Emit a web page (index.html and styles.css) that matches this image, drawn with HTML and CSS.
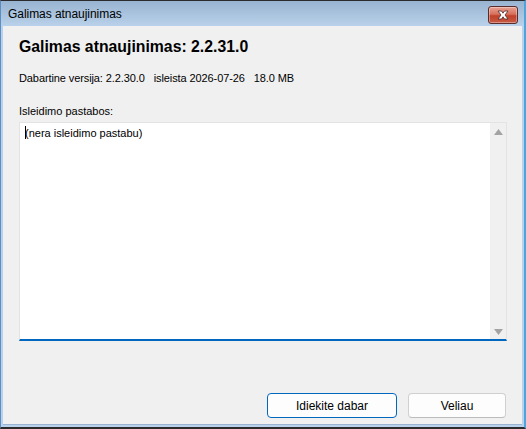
FILE: index.html
```html
<!DOCTYPE html>
<html>
<head>
<meta charset="utf-8">
<link rel="stylesheet" href="styles.css">
</head>
<body>
<div class="window">
  <div class="titlebar">
    <span class="title">Galimas atnaujinimas</span>
    <button class="close" aria-label="Close">
      <svg width="16" height="10" viewBox="0 0 16 10">
        <path d="M3 1 L6.5 1 L8 3.2 L9.5 1 L13 1 L10 5 L13 9 L9.5 9 L8 6.8 L6.5 9 L3 9 L6 5 Z" fill="#ffffff" stroke="#4a2a2a" stroke-width="0.8" stroke-linejoin="round"/>
      </svg>
    </button>
  </div>
  <div class="content">
    <h1 class="heading">Galimas atnaujinimas: 2.2.31.0</h1>
    <p class="meta"><span>Dabartine versija: 2.2.30.0</span><span>isleista 2026-07-26</span><span>18.0 MB</span></p>
    <label class="notes-label">Isleidimo pastabos:</label>
    <div class="notes">
      <div class="notes-text"><span class="caret"></span>(nera isleidimo pastabu)</div>
      <div class="scrollbar">
        <svg class="arrow" width="9" height="6" viewBox="0 0 9 6"><path d="M0 6 L4.5 0 L9 6 Z" fill="#a3a3a3"/></svg>
        <svg class="arrow" width="9" height="6" viewBox="0 0 9 6"><path d="M0 0 L4.5 6 L9 0 Z" fill="#a3a3a3"/></svg>
      </div>
    </div>
    <div class="actions">
      <button class="btn btn-default">Idiekite dabar</button>
      <button class="btn">Veliau</button>
    </div>
  </div>
</div>
</body>
</html>
```
FILE: styles.css
```css
* { box-sizing: border-box; }
html, body { margin: 0; padding: 0; }
body {
  width: 526px;
  height: 429px;
  background: #1e1e1e;
  font-family: "Liberation Sans", Arial, sans-serif;
  font-size: 12px;
  color: #000;
}
.window {
  width: 526px;
  height: 429px;
  display: flex;
  flex-direction: column;
  border-top: 1px solid #2b2b2b;
  border-left: 1px solid #5b8fc4;
  border-right: 2px solid #4aa6dc;
  border-bottom: 2px solid #2b2b2b;
  background: #b9d1ea;
  padding: 0 2px 2px 2px;
}
.titlebar {
  height: 25px;
  flex: none;
  display: flex;
  align-items: center;
  justify-content: space-between;
  background: linear-gradient(#99b4d1, #b9d1ea);
  margin: 0 -2px;
  padding: 0 6px 0 7px;
}
.title {
  font-family: "Liberation Sans", Arial, sans-serif;
  font-size: 12px;
  color: #000;
  padding-top: 1px;
  letter-spacing: -0.05px;
}
.close {
  width: 30px;
  height: 18px;
  margin-top: 2px;
  padding: 0;
  border: 1px solid #5a2c2c;
  border-radius: 3px;
  background: linear-gradient(#e8a294 0%, #d7705e 45%, #c0412a 55%, #c75b45 100%);
  display: flex;
  align-items: center;
  justify-content: center;
  box-shadow: inset 0 0 0 1px rgba(255,255,255,0.35);
}
.content {
  flex: 1;
  background: #f0f0f0;
  border-bottom: 1px solid #99b4d1;
  display: flex;
  flex-direction: column;
  padding: 11px 16px 6px 16px;
}
.heading {
  margin: 0;
  font-size: 15.8px;
  font-weight: bold;
  line-height: 20px;
}
.meta {
  margin: 14px 0 0 0;
  font-size: 11px;
  line-height: 14px;
  display: flex;
  gap: 9px;
  letter-spacing: -0.1px;
}
.notes-label {
  margin-top: 19px;
  font-size: 11px;
  line-height: 14px;
}
.notes {
  margin-top: 4px;
  height: 219px;
  width: 488px;
  display: flex;
  background: #fff;
  border: 1px solid #e3e3e3;
  border-bottom: 2px solid #0067c0;
}
.notes-text {
  flex: 1;
  padding: 3px 5px;
  font-size: 11px;
  line-height: 14px;
}
.caret {
  display: inline-block;
  width: 1px;
  height: 13px;
  background: #000;
  vertical-align: -2px;
  margin-right: -1px;
}
.scrollbar {
  width: 16px;
  background: #f0f0f0;
  display: flex;
  flex-direction: column;
  justify-content: space-between;
  align-items: center;
  padding: 6px 0 4px;
}
.actions {
  margin-top: auto;
  display: flex;
  justify-content: flex-end;
  gap: 11px;
}
.btn {
  height: 25px;
  width: 98px;
  font-family: "Liberation Sans", Arial, sans-serif;
  font-size: 12px;
  background: #fdfdfd;
  border: 1px solid #d0d0d0;
  border-bottom-color: #bcbcbc;
  border-radius: 4px;
  color: #000;
  padding: 0;
}
.btn-default {
  width: 130px;
  border: 1px solid #0067c0;
}
```
